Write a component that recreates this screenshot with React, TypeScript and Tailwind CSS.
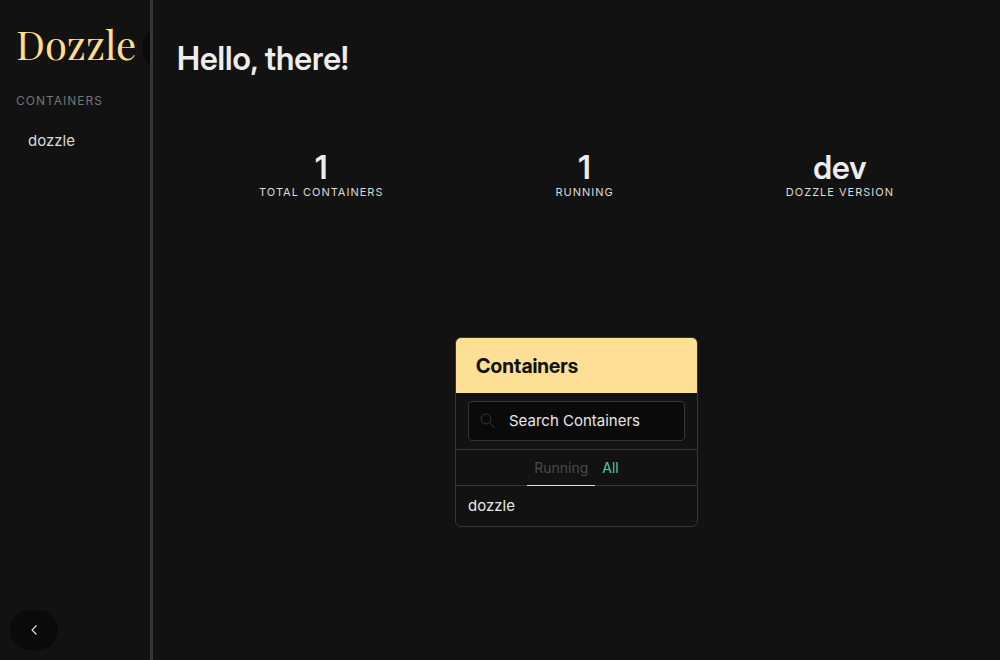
import React from "react";

const stats = [
  { value: "1", label: "Total Containers" },
  { value: "1", label: "Running" },
  { value: "dev", label: "Dozzle Version" },
];

function Sidebar() {
  return (
    <aside className="flex w-[15%] shrink-0 flex-col overflow-hidden px-4 pt-[22px] pb-[10px]">
      <div className="flex items-end gap-[6px]">
        <a
          href="#"
          className="font-['Playfair_Display','Liberation_Serif',serif] text-[40px] leading-[44px] text-[#ffdd8a]"
        >
          Dozzle
        </a>
        <button
          type="button"
          aria-label="Search"
          className="-mb-[2px] h-10 w-12 shrink-0 rounded-full bg-[#0a0a0a]"
        />
      </div>
      <nav className="mt-[26px] flex-1">
        <p className="text-[12px] leading-[18px] tracking-[1px] text-[#757575] uppercase">
          Containers
        </p>
        <ul className="mt-[11px]">
          <li>
            <a href="#dozzle" className="block px-3 py-2 text-[15px] leading-6 text-[#dbdbdb]">
              dozzle
            </a>
          </li>
        </ul>
      </nav>
      <button
        type="button"
        aria-label="Collapse menu"
        className="-ml-[6px] flex h-10 w-12 items-center justify-center rounded-full bg-[#0a0a0a] text-[#e6e6e6]"
      >
        <svg width="6" height="10" viewBox="0 0 6 10" fill="none" stroke="currentColor" strokeWidth="1.1">
          <path d="M5.5.5 1 5l4.500 4.500" />
        </svg>
      </button>
    </aside>
  );
}

function ContainersPanel() {
  return (
    <section className="mx-auto mt-[139px] w-[243px] overflow-hidden rounded-md border border-[#363636]">
      <h2 className="bg-[#fddf95] px-5 pt-4 pb-[14px] font-['Inter_Display','Inter',sans-serif] text-xl leading-[25px] font-bold text-[#121212]">
        Containers
      </h2>
      <div className="border-b border-[#363636] px-3 py-2">
        <label className="flex h-10 items-center gap-[13px] rounded border border-[#363636] bg-[#0a0a0a] px-[11px]">
          <svg width="16" height="16" viewBox="0 0 16 16" fill="none" stroke="#363636" className="shrink-0">
            <circle cx="6" cy="6" r="5" />
            <path d="m9.500 9.500 5 5" />
          </svg>
          <input
            type="text"
            aria-label="Search Containers"
            placeholder="Search Containers"
            className="w-full min-w-0 bg-transparent text-[15px] text-[#e8e8e8] outline-none placeholder:text-[#e8e8e8]"
          />
        </label>
      </div>
      <div className="flex justify-center text-sm leading-5">
        <a href="#running" className="z-10 -mb-px border-b border-[#ffdd8a] px-[7px] pt-2 pb-[7px] text-[#4a4a4a]">
          Running
        </a>
        <a href="#all" className="px-[7px] pt-2 pb-[7px] text-[#56c9a3]">
          All
        </a>
      </div>
      <a href="#dozzle" className="block border-t border-[#363636] px-3 py-2 text-[15px] leading-6 text-[#e8e8e8]">
        dozzle
      </a>
    </section>
  );
}

export default function App() {
  return (
    <div className="flex min-h-screen bg-[#121212] font-['Inter','Liberation_Sans',sans-serif] text-[#ededed]">
      <Sidebar />
      <div className="w-[3px] shrink-0 bg-[#363636]" />
      <main className="min-w-0 flex-1 px-6 pt-[41px]">
        <h1 className="font-['Inter_Display','Inter',sans-serif] text-[32px] leading-9 font-semibold">
          Hello, there!
        </h1>
        <dl className="-mx-1 mt-[73px] flex justify-around">
          {stats.map((stat) => (
            <div key={stat.label} className="flex flex-col-reverse text-center">
              <dt className="text-[11px] leading-[12px] tracking-[1px] text-[#dbdbdb] uppercase">{stat.label}</dt>
              <dd className="font-['Inter_Display','Inter',sans-serif] text-[32px] leading-9 font-semibold">
                {stat.value}
              </dd>
            </div>
          ))}
        </dl>
        <ContainersPanel />
      </main>
    </div>
  );
}
